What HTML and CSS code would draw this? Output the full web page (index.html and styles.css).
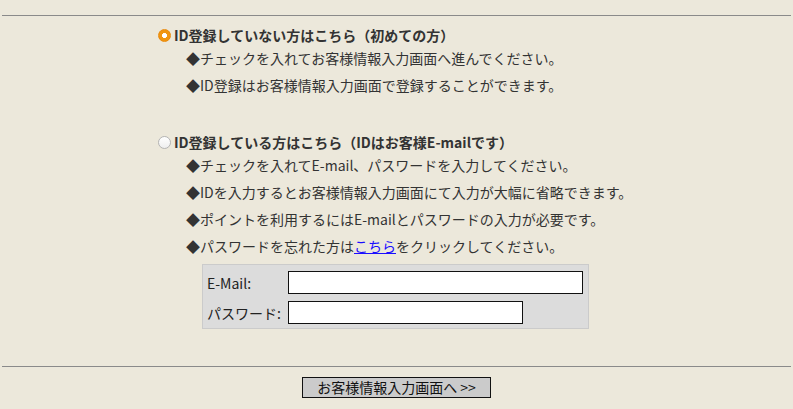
FILE: index.html
```html
<!DOCTYPE html>
<html lang="ja">
<head>
    <meta charset="UTF-8">
    <meta name="viewport" content="width=device-width, initial-scale=1.0">
    <title>お客様情報入力</title>
    <link rel="stylesheet" href="styles.css">
</head>
<body>

<hr class="rule">

<!-- ID登録の選択 -->
<div class="choices">
    <div class="choice">
        <label class="choiceTitle">
            <input type="radio" name="idType" value="new" checked>
            ID登録していない方はこちら（初めての方）
        </label>
        <ul class="notes">
            <li>◆チェックを入れてお客様情報入力画面へ進んでください。</li>
            <li>◆ID登録はお客様情報入力画面で登録することができます。</li>
        </ul>
    </div>

    <div class="choice choiceMember">
        <label class="choiceTitle">
            <input type="radio" name="idType" value="member">
            ID登録している方はこちら（IDはお客様E-mailです）
        </label>
        <ul class="notes">
            <li>◆チェックを入れてE-mail、パスワードを入力してください。</li>
            <li>◆IDを入力するとお客様情報入力画面にて入力が大幅に省略できます。</li>
            <li>◆ポイントを利用するにはE-mailとパスワードの入力が必要です。</li>
            <li>◆パスワードを忘れた方は<a href="javascript:void(0);">こちら</a>をクリックしてください。</li>
        </ul>

        <!-- ログイン欄 -->
        <div class="loginBox">
            <label for="email">E-Mail:</label>
            <input type="text" id="email" class="inputMail">

            <label for="password">パスワード:</label>
            <input type="password" id="password" class="inputPass">
        </div>
    </div>
</div>

<hr class="rule ruleBottom">

<div class="actions">
    <button type="button">お客様情報入力画面へ &gt;&gt;</button>
</div>

</body>
</html>
```

FILE: styles.css
```css
body {
    margin: 0;
    padding: 0;
    background-color: #ece8db;
    color: #333;
    font-family: "Noto Sans CJK JP", "Noto Sans", sans-serif;
    font-size: 14px;
}

.rule {
    border: 0;
    border-top: 1px solid #8a8a8a;
    margin: 15px 2px 0;
    height: 0;
}

.ruleBottom {
    margin-top: 37px;
}

.choices {
    padding: 9px 0 0 158px;
}

.choiceMember {
    margin-top: 33px;
}

.choiceTitle {
    display: flex;
    align-items: center;
    gap: 3px;
    height: 20px;
    font-weight: bold;
    cursor: pointer;
}

/* ラジオボタン */
.choiceTitle input[type="radio"] {
    appearance: none;
    -webkit-appearance: none;
    width: 13px;
    height: 13px;
    margin: 0;
    border-radius: 50%;
    border: 1px solid #b4b4b4;
    background: linear-gradient(#fff, #eeeeee);
    box-sizing: border-box;
}

.choiceTitle input[type="radio"]:checked {
    border-color: #ea8a0c;
    background: radial-gradient(circle, #fff 0 2.2px, #f0950f 2.8px);
}

.notes {
    list-style-type: none;
    margin: 0;
    padding: 0 0 0 28px;
}

.notes li {
    line-height: 27px;
}

.notes a {
    color: #1a0dff;
    text-decoration: underline;
}

.loginBox {
    display: grid;
    grid-template-columns: 81px auto;
    justify-items: start;
    align-items: center;
    row-gap: 7px;
    width: 387px;
    box-sizing: border-box;
    margin: 4px 0 0 44px;
    padding: 6px 0 4px 4px;
    background-color: #dcdcdc;
    border: 1px solid #cbcbcb;
    color: #222;
}

.loginBox input {
    height: 23px;
    box-sizing: border-box;
    margin: 0;
    padding: 1px 3px;
    border: 1px solid #111;
    background-color: #fff;
    font-size: 14px;
}

.inputMail {
    width: 295px;
}

.inputPass {
    width: 235px;
}

.actions {
    display: flex;
    justify-content: center;
    padding-top: 10px;
}

button {
    height: 21px;
    padding: 0 14px;
    background-color: #cbcbcb;
    border: 1px solid #111;
    color: #111;
    font-family: "Noto Sans CJK JP", sans-serif;
    font-size: 14px;
    line-height: 19px;
    cursor: pointer;
}
```
